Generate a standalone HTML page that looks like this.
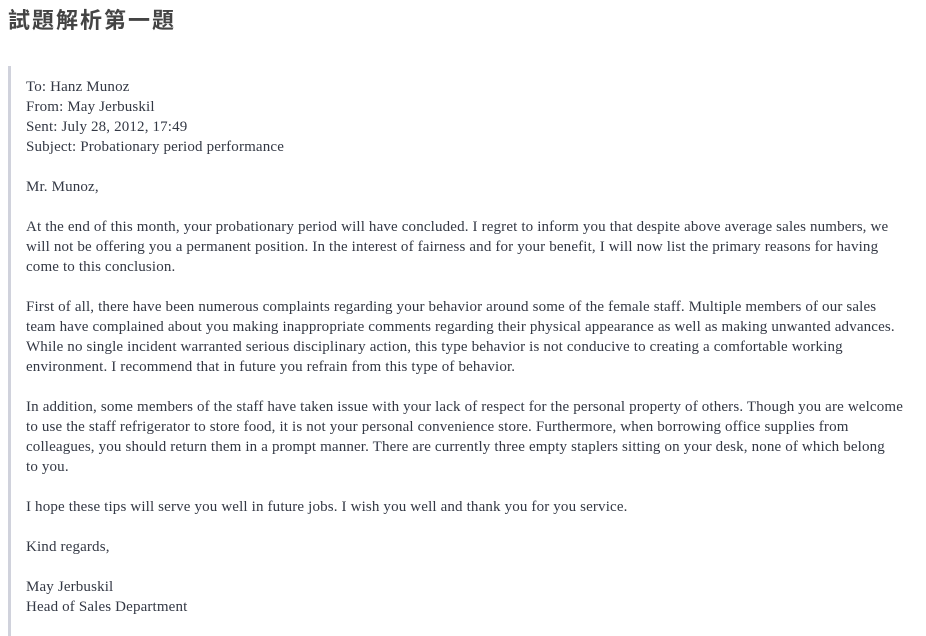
<!DOCTYPE html>
<html><head><meta charset="utf-8"><style>
body{margin:0;background:#fff;width:926px;height:627px;overflow:hidden}
h1{position:absolute;left:8px;top:5px;margin:0;font:bold 22px/32px "Liberation Sans","Noto Sans CJK TC",sans-serif;color:#444;letter-spacing:2px}
.q{position:absolute;left:8px;top:66px;width:892px;height:570px;border-left:3px solid #d0d2dc;padding-left:15px;box-sizing:border-box;font:15px/20px "Liberation Serif",serif;color:#333844;white-space:nowrap;letter-spacing:0.15px}
p{margin:0 0 20px}
</style></head><body>
<h1>試題解析第一題</h1>
<div class="q">
<p style="margin-top:11px">To: Hanz Munoz<br>From: May Jerbuskil<br>Sent: July 28, 2012, 17:49<br>Subject: Probationary period performance</p>
<p>Mr. Munoz,</p>
<p>At the end of this month, your probationary period will have concluded. I regret to inform you that despite above average sales numbers, we<br>will not be offering you a permanent position. In the interest of fairness and for your benefit, I will now list the primary reasons for having<br>come to this conclusion.</p>
<p>First of all, there have been numerous complaints regarding your behavior around some of the female staff. Multiple members of our sales<br>team have complained about you making inappropriate comments regarding their physical appearance as well as making unwanted advances.<br>While no single incident warranted serious disciplinary action, this type behavior is not conducive to creating a comfortable working<br>environment. I recommend that in future you refrain from this type of behavior.</p>
<p>In addition, some members of the staff have taken issue with your lack of respect for the personal property of others. Though you are welcome<br>to use the staff refrigerator to store food, it is not your personal convenience store. Furthermore, when borrowing office supplies from<br>colleagues, you should return them in a prompt manner. There are currently three empty staplers sitting on your desk, none of which belong<br>to you.</p>
<p>I hope these tips will serve you well in future jobs. I wish you well and thank you for you service.</p>
<p>Kind regards,</p>
<p>May Jerbuskil<br>Head of Sales Department</p>
</div>
</body></html>
